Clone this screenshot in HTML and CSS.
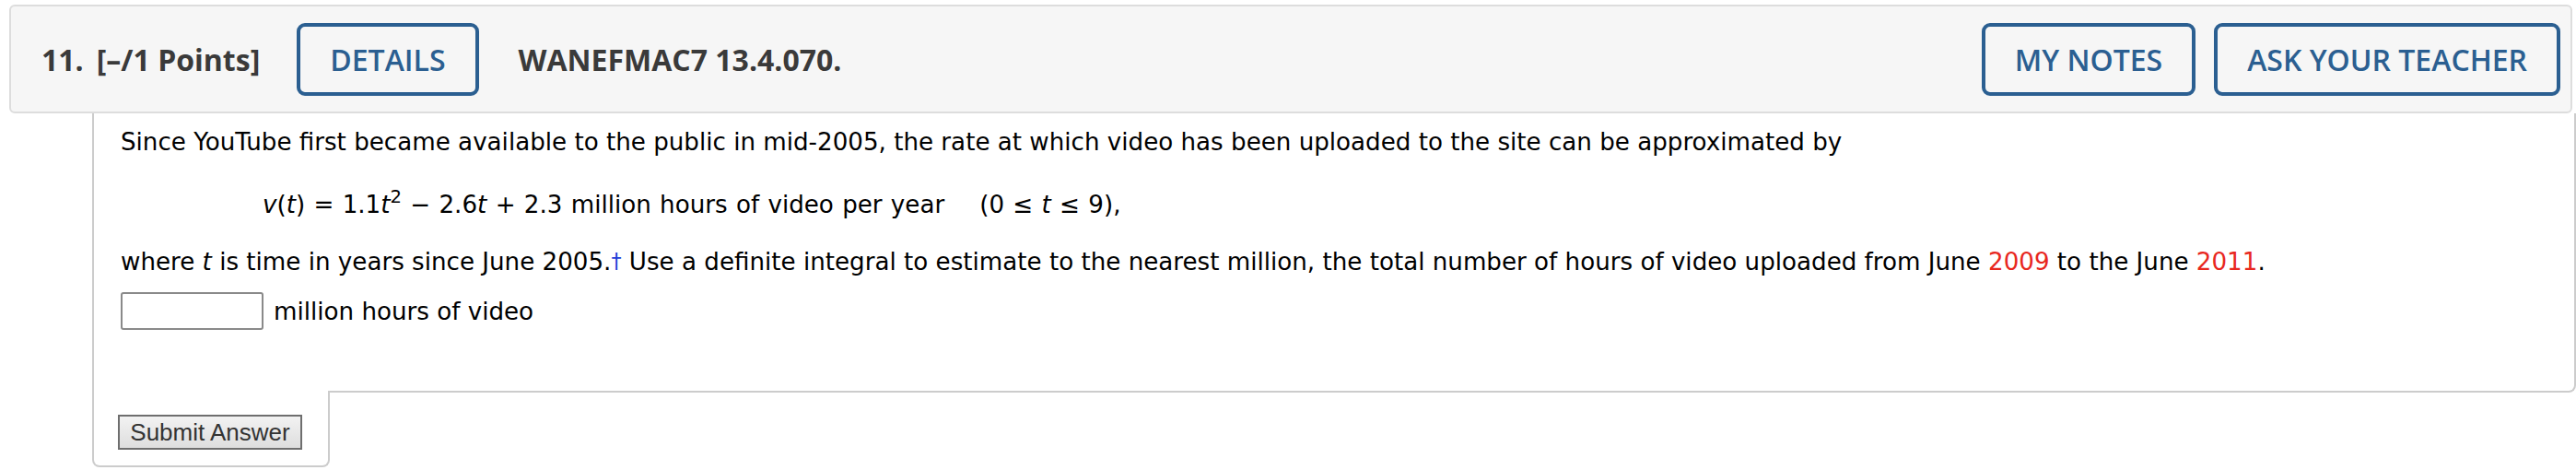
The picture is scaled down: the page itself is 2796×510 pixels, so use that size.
FILE: index.html
```html
<!DOCTYPE html>
<html lang="en">
<head>
<meta charset="utf-8">
<title>Question 11</title>
<link rel="stylesheet" href="styles.css">
</head>
<body>
<div class="page">
  <div class="qhead">
    <span class="qnum">11.</span>
    <span class="qpts">[–/1 Points]</span>
    <button class="hbtn details">DETAILS</button>
    <span class="qcode">WANEFMAC7 13.4.070.</span>
    <span class="spacer"></span>
    <div class="hright">
      <button class="hbtn">MY NOTES</button>
      <button class="hbtn">ASK YOUR TEACHER</button>
    </div>
  </div>
  <div class="qbody">
    <p class="l1">Since YouTube first became available to the public in mid-2005, the rate at which video has been uploaded to the site can be approximated by</p>
    <p class="eq"><i>v</i>(<i>t</i>) = 1.1<i>t</i><sup>2</sup> − 2.6<i>t</i> + 2.3 million hours of video per year<span class="dom">(0 ≤ <i>t</i> ≤ 9),</span></p>
    <p class="l3">where <i>t</i> is time in years since June 2005.<span class="dag">†</span> Use a definite integral to estimate to the nearest million, the total number of hours of video uploaded from June <span class="red">2009</span> to the June <span class="red">2011</span>.</p>
    <div class="ans">
      <input class="abox" type="text">
      <span class="unit">million hours of video</span>
    </div>
  </div>
  <div class="subtab">
    <button class="submit">Submit Answer</button>
  </div>
</div>
</body>
</html>
```
FILE: styles.css
```css
html, body {
  margin: 0;
  padding: 0;
  background: #ffffff;
}
.page {
  padding: 5px 0 0 10px;
}
.qhead {
  display: flex;
  align-items: center;
  height: 114px;
  margin-right: 4px;
  background: #f6f6f6;
  border: 2px solid #dddddd;
  border-radius: 6px;
  padding: 0 11px 0 33px;
  font-family: "Open Sans", "DejaVu Sans", sans-serif;
  color: #3a3a3a;
  font-size: 32px;
  font-weight: 700;
}
.qpts {
  margin-left: 14px;
}
.hbtn {
  height: 79px;
  box-sizing: border-box;
  border: 4px solid #2b5f91;
  border-radius: 9px;
  background: transparent;
  color: #2b5f91;
  font-family: "Open Sans", "DejaVu Sans", sans-serif;
  font-size: 32px;
  font-weight: 600;
  padding: 0 32px;
}
.details {
  margin-left: 40px;
}
.qcode {
  margin-left: 43px;
}
.spacer {
  flex: 1;
}
.hright {
  display: flex;
  gap: 20px;
}
.qbody {
  margin-left: 90px;
  border-left: 2px solid #cccccc;
  border-right: 2px solid #cccccc;
  border-bottom: 2px solid #cccccc;
  border-bottom-right-radius: 8px;
  padding: 11px 0 66px 29px;
  font-family: "DejaVu Sans", Verdana, sans-serif;
  font-size: 26.15px;
  color: #000000;
}
.qbody p {
  margin: 0;
  line-height: 40px;
  white-space: nowrap;
}
.eq {
  margin-top: 28px !important;
  padding-left: 154px;
  word-spacing: 1px;
}
.eq sup {
  font-size: 0.75em;
  line-height: 0;
  vertical-align: 0.55em;
}
.dom {
  margin-left: 38px;
}
.l3 {
  margin-top: 21px !important;
}
.dag {
  color: #1f3fd8;
  font-size: 0.85em;
  vertical-align: 0.1em;
}
.red {
  color: #e8271e;
}
.ans {
  display: flex;
  align-items: center;
  margin-top: 13px;
  height: 41px;
}
.abox {
  width: 155px;
  height: 41px;
  box-sizing: border-box;
  margin: 0;
  border: 2px solid #8a8a8a;
  border-radius: 3px;
  background: #ffffff;
}
.unit {
  margin-left: 11px;
}
.subtab {
  margin-left: 90px;
  margin-top: -2px;
  width: 258px;
  height: 83px;
  box-sizing: border-box;
  border-left: 2px solid #cccccc;
  border-right: 2px solid #cccccc;
  border-bottom: 2px solid #cccccc;
  border-bottom-left-radius: 8px;
  border-bottom-right-radius: 8px;
  background: #ffffff;
  padding: 26px 0 0 26px;
}
.submit {
  height: 38px;
  width: 200px;
  box-sizing: border-box;
  border: 2px solid #6e6e6e;
  background: linear-gradient(#f2f2f2, #dedede);
  font-family: "Liberation Sans", Arial, sans-serif;
  font-size: 26px;
  color: #333333;
  padding: 0;
  margin: 0;
}
```
